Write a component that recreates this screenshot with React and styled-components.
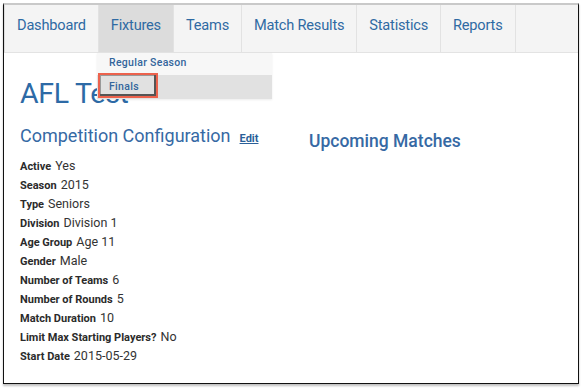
import React from 'react'
import styled, { createGlobalStyle } from 'styled-components'

const Global = createGlobalStyle`
  body {
    margin: 0;
    background: #fff;
    font-family: Roboto, "Liberation Sans", sans-serif;
  }
`

const Page = styled.div`
  width: 581px;
  height: 388px;
  padding: 3px 2px 0 3px;
  box-sizing: border-box;
  position: relative;
`

const Frame = styled.div`
  height: 381px;
  box-sizing: border-box;
  border: 1px solid #111;
  border-top: 2px solid #c9c9c9;
  box-shadow: 0 2px 2px rgba(0, 0, 0, 0.25);
  background: #fff;
  position: relative;
`

const Nav = styled.ul`
  display: flex;
  margin: 0;
  padding: 0;
  list-style: none;
  height: 47px;
  background: #f4f4f4;
  border-bottom: 1px solid #e3e3e3;
  border-left: 1px solid #dcdcdc;
`

const NavItem = styled.li`
  display: flex;
  align-items: center;
  padding: 0 12px 8px 12px;
  font-size: 14.6px;
  color: #2f6aa3;
  border-right: 1px solid #e2e2e2;
  background: ${p => (p.$active ? '#dcdcdc' : 'transparent')};
  letter-spacing: -0.2px;
`

const Dropdown = styled.ul`
  position: absolute;
  top: 48px;
  left: 93px;
  width: 175px;
  margin: 0;
  padding: 0;
  list-style: none;
  box-shadow: 0 1px 2px rgba(0, 0, 0, 0.08);
`

const DropItem = styled.li`
  height: ${p => (p.$active ? 24 : 22)}px;
  display: flex;
  align-items: center;
  padding: 0 0 ${p => (p.$active ? 2 : 3)}px 12px;
  box-sizing: border-box;
  font-size: 10.5px;
  font-weight: 500;
  letter-spacing: 0.3px;
  color: #33659c;
  background: ${p => (p.$active ? '#e1e1e1' : '#f7f7f7')};
  position: relative;
`

const Highlight = styled.span`
  position: absolute;
  left: 1px;
  top: -2px;
  width: 56px;
  height: 21px;
  border: 2px solid #ec624d;
  box-shadow: inset -2px -2px 0 #555, inset 1px 1px 0 #999;
  box-sizing: content-box;
`

const Content = styled.div`
  padding: 24px 0 0 16px;
`

const Title = styled.h1`
  margin: 0;
  font-size: 28.5px;
  font-weight: 400;
  color: #2d6aa6;
  letter-spacing: -0.3px;
`

const Columns = styled.div`
  display: grid;
  grid-template-columns: 289px 1fr;
  margin-top: 15px;
`

const SectionHead = styled.h2`
  margin: ${p => (p.$offset ? '6px 0 0' : '0')};
  font-size: ${p => (p.$offset ? '17.5px' : '18px')};
  font-weight: ${p => (p.$offset ? 500 : 400)};
  color: #3669a4;
  display: flex;
  align-items: baseline;
  gap: 9px;
`

const EditLink = styled.a`
  font-size: 11px;
  font-weight: 700;
  color: #2a5f99;
  text-decoration: underline;
`

const List = styled.dl`
  margin: 12px 0 0;
`

const Row = styled.div`
  height: 19px;
  display: flex;
  align-items: baseline;
  gap: 4px;
`

const Label = styled.dt`
  font-size: 11px;
  font-weight: 700;
  color: #2b2b2b;
`

const Value = styled.dd`
  margin: 0;
  font-size: 12.5px;
  color: #333;
`

const navItems = ['Dashboard', 'Fixtures', 'Teams', 'Match Results', 'Statistics', 'Reports']

const config = [
  ['Active', 'Yes'],
  ['Season', '2015'],
  ['Type', 'Seniors'],
  ['Division', 'Division 1'],
  ['Age Group', 'Age 11'],
  ['Gender', 'Male'],
  ['Number of Teams', '6'],
  ['Number of Rounds', '5'],
  ['Match Duration', '10'],
  ['Limit Max Starting Players?', 'No'],
  ['Start Date', '2015-05-29'],
]

export default function App() {
  return (
    <Page>
      <Global />
      <Frame>
        <Nav>
          {navItems.map(n => (
            <NavItem key={n} $active={n === 'Fixtures'}>{n}</NavItem>
          ))}
        </Nav>
        <Dropdown>
          <DropItem>Regular Season</DropItem>
          <DropItem $active>
            <Highlight />
            Finals
          </DropItem>
        </Dropdown>
        <Content>
          <Title>AFL Test</Title>
          <Columns>
            <div>
              <SectionHead>
                Competition Configuration
                <EditLink href="#">Edit</EditLink>
              </SectionHead>
              <List>
                {config.map(([k, v]) => (
                  <Row key={k}>
                    <Label>{k}</Label>
                    <Value>{v}</Value>
                  </Row>
                ))}
              </List>
            </div>
            <div>
              <SectionHead $offset>Upcoming Matches</SectionHead>
            </div>
          </Columns>
        </Content>
      </Frame>
    </Page>
  )
}
